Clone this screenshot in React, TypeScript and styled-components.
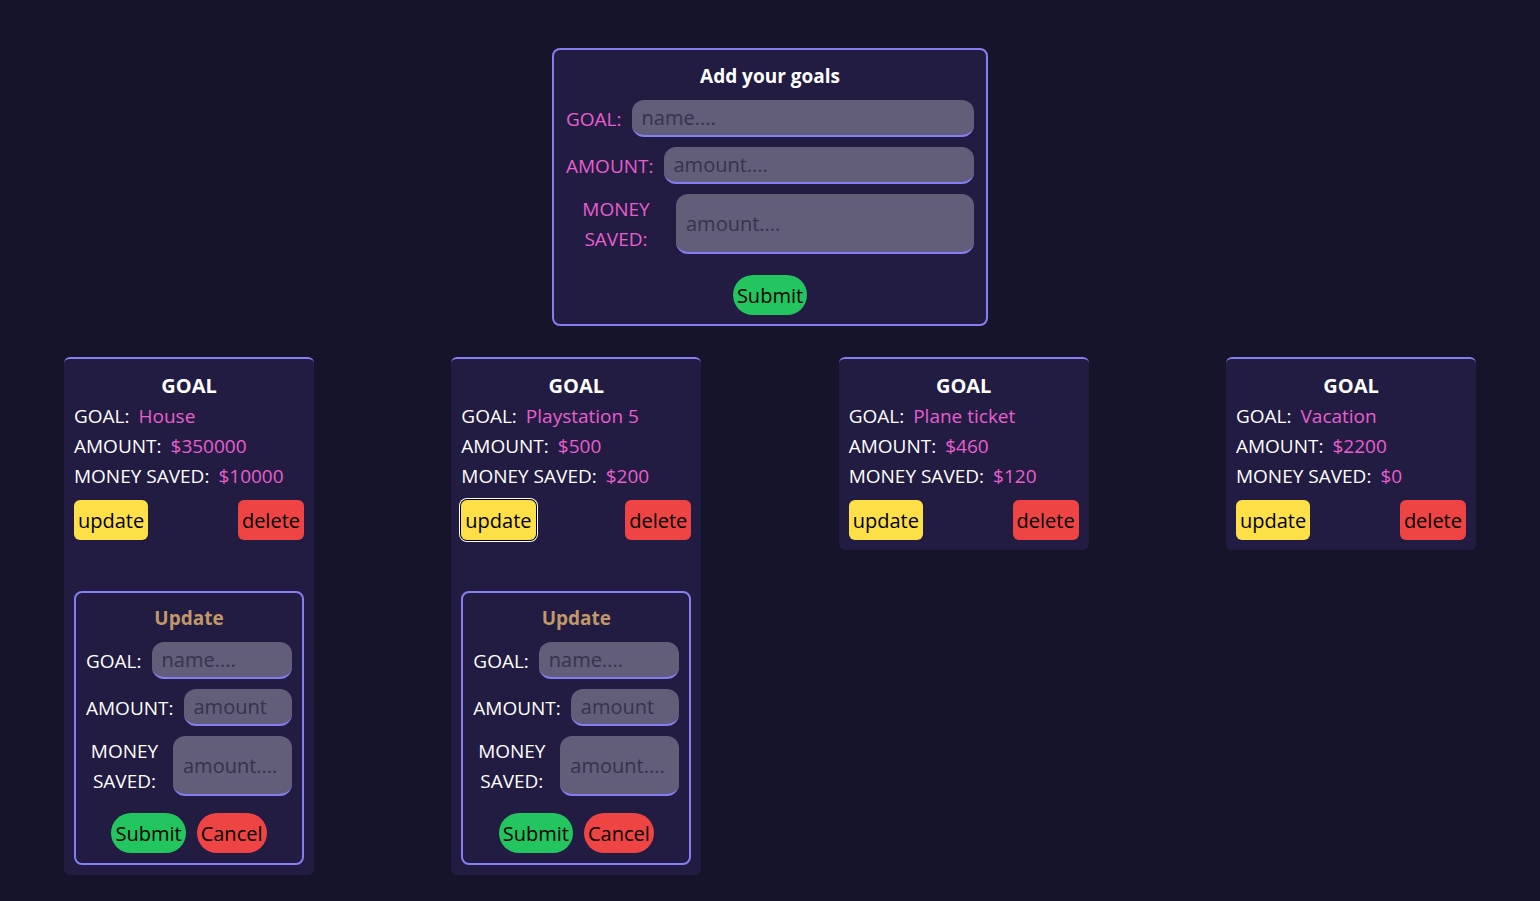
import React from 'react';
import styled, { createGlobalStyle } from 'styled-components';

interface IGoal {
    name: string;
    amount: number;
    saved: number;
    editing: boolean;
    focused?: boolean;
}

const goals: IGoal[] = [
    { name: 'House', amount: 350000, saved: 10000, editing: true },
    { name: 'Playstation 5', amount: 500, saved: 200, editing: true, focused: true },
    { name: 'Plane ticket', amount: 460, saved: 120, editing: false },
    { name: 'Vacation', amount: 2200, saved: 0, editing: false },
];

const GlobalStyle = createGlobalStyle`
    html, body {
        margin: 0;
        padding: 0;
        background: #15142a;
    }
    body {
        font-family: "Open Sans", "Noto Sans", sans-serif;
        color: #ffffff;
    }
    * { box-sizing: border-box; }
`;

const App = () => {
    return (
        <Page>
            <GlobalStyle />
            <AddForm>
                <FormTitle>Add your goals</FormTitle>
                <FieldRow>
                    <FieldLabel $pink>GOAL:</FieldLabel>
                    <FieldInput placeholder='name....' />
                </FieldRow>
                <FieldRow>
                    <FieldLabel $pink>AMOUNT:</FieldLabel>
                    <FieldInput placeholder='amount....' />
                </FieldRow>
                <FieldRow>
                    <FieldLabel $pink $width={100}>MONEY SAVED:</FieldLabel>
                    <FieldInput placeholder='amount....' />
                </FieldRow>
                <ButtonRow $top={21}>
                    <PillButton $color='#22c55e'>Submit</PillButton>
                </ButtonRow>
            </AddForm>
            <GoalsRow>
                {goals.map(goal => (
                    <GoalCard key={goal.name}>
                        <CardTitle>GOAL</CardTitle>
                        <InfoLine>GOAL:<Value>{goal.name}</Value></InfoLine>
                        <InfoLine>AMOUNT:<Value>${goal.amount}</Value></InfoLine>
                        <InfoLine>MONEY SAVED:<Value>${goal.saved}</Value></InfoLine>
                        <CardActions>
                            <SquareButton $color='#fde047' $focused={goal.focused}>update</SquareButton>
                            <SquareButton $color='#ef4444'>delete</SquareButton>
                        </CardActions>
                        {goal.editing && (
                            <UpdateForm>
                                <UpdateTitle>Update</UpdateTitle>
                                <FieldRow>
                                    <FieldLabel>GOAL:</FieldLabel>
                                    <FieldInput placeholder='name....' />
                                </FieldRow>
                                <FieldRow>
                                    <FieldLabel>AMOUNT:</FieldLabel>
                                    <FieldInput placeholder='amount' />
                                </FieldRow>
                                <FieldRow>
                                    <FieldLabel $width={77}>MONEY SAVED:</FieldLabel>
                                    <FieldInput placeholder='amount....' />
                                </FieldRow>
                                <ButtonRow $top={17}>
                                    <PillButton $color='#22c55e'>Submit</PillButton>
                                    <PillButton $color='#ef4444'>Cancel</PillButton>
                                </ButtonRow>
                            </UpdateForm>
                        )}
                    </GoalCard>
                ))}
            </GoalsRow>
        </Page>
    );
};

export default App;

const Page = styled.div`
    min-height: 901px;
    padding-top: 48px;
    display: flex;
    flex-direction: column;
    align-items: center;
`;

const AddForm = styled.form`
    width: 436px;
    background: #221b42;
    border: 2px solid #857ef0;
    border-radius: 8px;
    padding: 12px 12px 9px;
    display: flex;
    flex-direction: column;
    gap: 10px;
`;

const FormTitle = styled.h2`
    margin: 0;
    text-align: center;
    font-size: 19px;
    line-height: 28px;
    font-weight: 700;
    color: #ffffff;
`;

const FieldRow = styled.div`
    display: flex;
    align-items: stretch;
    gap: 10px;
`;

const FieldLabel = styled.label<{ $pink?: boolean; $width?: number }>`
    flex: none;
    display: flex;
    align-items: center;
    justify-content: center;
    text-align: center;
    font-size: 19px;
    line-height: 30px;
    color: ${p => (p.$pink ? '#e85fce' : '#ffffff')};
    width: ${p => (p.$width ? `${p.$width}px` : 'auto')};
`;

const FieldInput = styled.input`
    flex: 1;
    min-width: 0;
    min-height: 37px;
    border: none;
    border-bottom: 2px solid #857ef0;
    border-radius: 12px;
    background: #625d79;
    padding: 0 10px;
    font-family: inherit;
    font-size: 20px;
    color: #ffffff;
    outline: none;
    &::placeholder {
        color: #353349;
    }
`;

const ButtonRow = styled.div<{ $top: number }>`
    margin-top: ${p => p.$top - 10}px;
    display: flex;
    justify-content: center;
    gap: 11px;
`;

const PillButton = styled.button<{ $color: string }>`
    height: 40px;
    padding: 0 4px;
    border: none;
    border-radius: 9999px;
    background: ${p => p.$color};
    color: #000000;
    font-family: inherit;
    font-size: 20px;
    cursor: pointer;
`;

const GoalsRow = styled.div`
    width: 100%;
    margin-top: 31px;
    padding: 0 64px;
    display: flex;
    justify-content: space-between;
    align-items: flex-start;
`;

const GoalCard = styled.div`
    width: 250px;
    background: #221b42;
    border-top: 2px solid #857ef0;
    border-radius: 6px;
    padding: 13px 10px 10px;
    display: flex;
    flex-direction: column;
`;

const CardTitle = styled.h3`
    margin: 0 0 1px;
    text-align: center;
    font-size: 20px;
    line-height: 28px;
    font-weight: 700;
`;

const InfoLine = styled.div`
    font-size: 19px;
    line-height: 30px;
    color: #ffffff;
    white-space: nowrap;
`;

const Value = styled.span`
    margin-left: 9px;
    color: #e85fce;
`;

const CardActions = styled.div`
    margin-top: 9px;
    display: flex;
    justify-content: space-between;
`;

const SquareButton = styled.button<{ $color: string; $focused?: boolean }>`
    height: 40px;
    padding: 0 4px;
    border: none;
    border-radius: 6px;
    background: ${p => p.$color};
    color: #000000;
    font-family: inherit;
    font-size: 20px;
    cursor: pointer;
    box-shadow: ${p => (p.$focused ? '0 0 0 1px #000, 0 0 0 2px #fff' : 'none')};
`;

const UpdateForm = styled.form`
    margin-top: 51px;
    border: 2px solid #857ef0;
    border-radius: 8px;
    padding: 11px 10px 10px;
    display: flex;
    flex-direction: column;
    gap: 10px;
`;

const UpdateTitle = styled.h4`
    margin: 0;
    text-align: center;
    font-size: 19px;
    line-height: 28px;
    font-weight: 700;
    color: #c0986a;
`;
